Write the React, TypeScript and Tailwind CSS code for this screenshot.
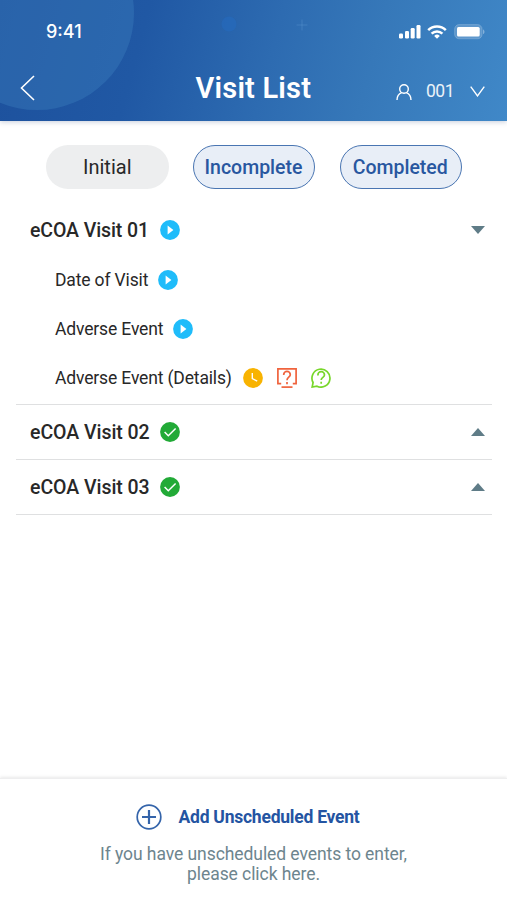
import clsx from "clsx";

const FILTERS = [
  { label: "Initial", active: false },
  { label: "Incomplete", active: true },
  { label: "Completed", active: true },
];

const DETAILS = [
  { label: "Date of Visit", status: "play", width: "w-[92.5px]" },
  { label: "Adverse Event", status: "play", width: "w-[107px]" },
  { label: "Adverse Event (Details)", status: "waiting", width: "w-[177px]" },
];

function PlayIcon() {
  return (
    <svg className="h-5 w-5 shrink-0" viewBox="0 0 20 20">
      <circle cx="10" cy="10" r="9.9" fill="#1fbcfa" />
      <path d="M7.6 5.4v9.2L13.4 10z" fill="#fff" />
    </svg>
  );
}

function CheckIcon() {
  return (
    <svg className="h-5 w-5 shrink-0" viewBox="0 0 20 20" fill="none">
      <circle cx="10" cy="10" r="9.9" fill="#22aa37" />
      <path d="m4.6 10 3.7 3.7 7.3-7.2" stroke="#fff" strokeWidth="1.5" />
    </svg>
  );
}

function ClockIcon() {
  return (
    <svg className="h-5 w-5 shrink-0" viewBox="0 0 20 20" fill="none">
      <circle cx="10" cy="10" r="9.9" fill="#f8b301" />
      <path d="M9.3 5v5.5l4.9 2.7" stroke="#fff" strokeWidth="1.4" />
    </svg>
  );
}

function QueryIcon() {
  return (
    <svg className="h-5 w-5 shrink-0" viewBox="0 0 20 20" fill="none" stroke="#f0633d" strokeWidth="1.7">
      <path d="M4.2 15.6H.9V.9h18.2v14.7h-3.3" />
      <path d="M4.5 19.1h11" />
      <path d="M6.7 7V6.7a3.3 3.3 0 0 1 6.6 0c0 2.5-3.3 2.6-3.3 5.5M10 14v2.2" />
    </svg>
  );
}

function AnswerIcon() {
  return (
    <svg className="h-5 w-5 shrink-0" viewBox="0 0 20 20" fill="none" stroke="#78d72b" strokeWidth="1.7">
      <path d="M1.2 19l.9-4.5A9 9 0 1 1 6 18.2L1.2 19z" />
      <path d="M6.9 7.4v-.5a3.3 3.3 0 0 1 6.6 0c0 2.5-3.3 2.4-3.3 5M10.2 13.8v2" />
    </svg>
  );
}

function Arrow({ open }: { open?: boolean }) {
  return (
    <svg className={clsx("h-2 w-[14px]", open && "rotate-180")} viewBox="0 0 14 8">
      <path d="M7 0 14 8H0z" fill="#5f7c87" />
    </svg>
  );
}

function StatusBar() {
  return (
    <div className="flex h-[63px] items-center justify-between pr-[22px] pl-[46px]">
      <span className="w-[38px] font-[Inter] text-[18px] font-medium whitespace-nowrap">9:41</span>
      <div className="flex items-center">
        <svg className="h-[15px] w-[22px]" viewBox="0 0 22 15" fill="#fff">
          <rect x="0" y="9.5" width="4" height="5" rx="1.2" />
          <rect x="6" y="7" width="4" height="7.5" rx="1.2" />
          <rect x="11.7" y="4" width="4" height="10.5" rx="1.2" />
          <rect x="17.5" y="1" width="4" height="13.5" rx="1.2" />
        </svg>
        <svg className="ml-1.5 h-[14px] w-[20px]" viewBox="0 0 20 14" fill="none" stroke="#fff" strokeWidth="2.5">
          <path d="M1.2 5.1a12.6 12.6 0 0 1 17.6 0" />
          <path d="M4.6 8.6a7.7 7.7 0 0 1 10.8 0" />
          <path d="M10 13.7 7.2 10.9a4 4 0 0 1 5.6 0z" fill="#fff" stroke="none" />
        </svg>
        <svg className="ml-[7px] h-4 w-[31px]" viewBox="0 0 31 16">
          <rect x=".6" y=".6" width="27.5" height="14.2" rx="4.5" fill="#fff" fillOpacity=".18" stroke="#fff" strokeOpacity=".18" />
          <rect x="3" y="3" width="22.7" height="9.4" rx="1.5" fill="#fff" />
          <path d="M29.2 5.4c1.6.7 1.6 4 0 4.7z" fill="#fff" fillOpacity=".45" />
        </svg>
      </div>
    </div>
  );
}

function Header() {
  return (
    <header className="relative h-[120.5px] shrink-0 overflow-hidden bg-[linear-gradient(105deg,#1d519d_0%,#2058a4_28%,#2d6bb1_53%,#3678b9_72%,#4088c8_100%)] text-white shadow-[0_1px_5px_rgba(30,60,110,0.25)]">
      <svg className="absolute inset-0 h-[120px] w-full" viewBox="0 0 507 120">
        <circle cx="37" cy="13" r="97" fill="#3d80bf" fillOpacity=".4" />
        <circle cx="229" cy="24" r="7.5" fill="#2270ca" fillOpacity=".35" />
        <path d="M302 19.5v11M296.5 25h11" stroke="#6da4df" strokeOpacity=".3" />
      </svg>
      <div className="relative">
        <StatusBar />
        <div className="grid h-[50px] grid-cols-[1fr_116px_1fr] items-center pr-[22px] pl-5">
          <svg className="h-[26px] w-[15px]" viewBox="0 0 15 26" fill="none" stroke="#fff" strokeWidth="1.6">
            <path d="M14 1 1.5 13 14 25" />
          </svg>
          <h1 className="pt-px pl-px text-center text-[29px] font-semibold tracking-[0.2px] whitespace-nowrap">Visit List</h1>
          <div className="mt-[7px] flex items-center justify-end">
            <svg className="h-4 w-4" viewBox="0 0 16 16" fill="none" stroke="#fff" strokeWidth="1.4">
              <circle cx="8" cy="5" r="4.3" />
              <path d="M1 16c0-3.7 2.2-6.3 4.7-7.3M15 16c0-3.7-2.2-6.3-4.7-7.3" />
            </svg>
            <span className="ml-[14px] w-[28px] text-[17.5px] tracking-[-0.5px] whitespace-nowrap opacity-90">001</span>
            <svg className="ml-4 h-[11px] w-[15px]" viewBox="0 0 15 11" fill="none" stroke="#fff" strokeWidth="1.4">
              <path d="m.7.7 6.8 9.2L14.3.7" />
            </svg>
          </div>
        </div>
      </div>
    </header>
  );
}

export default function App() {
  return (
    <div className="flex h-[900px] w-[507px] flex-col overflow-hidden bg-white font-[Roboto,sans-serif] text-[#282828]">
      <Header />
      <main className="flex-1 pt-[24.5px] pr-[15px] pl-4">
        <div className="flex justify-between pr-[30px] pl-[30px]">
          {FILTERS.map(({ label, active }) => (
            <button
              key={label}
              className={clsx(
                "h-11 w-[122.5px] rounded-full",
                active
                  ? "border-[1.5px] border-[#4975b2] bg-[#e8eef7] pt-px pr-px text-[19.5px] font-medium text-[#2857a0]"
                  : "bg-[#edeeef] text-[20px]"
              )}
            >
              {label}
            </button>
          ))}
        </div>
        <section className="mt-4 border-b border-[#dfe0e1] pb-[2px]">
          <div className="flex h-[50px] items-center justify-between pr-[7.5px] pl-[14px]">
            <div className="flex items-center gap-[10.5px]">
              <h2 className="w-[119px] pt-[2px] text-[19.5px] font-medium tracking-[-0.1px] whitespace-nowrap">eCOA Visit 01</h2>
              <PlayIcon />
            </div>
            <Arrow open />
          </div>
          {DETAILS.map(({ label, status, width }) => (
            <div key={label} className="flex h-[49px] items-center pl-[39px]">
              <span className={clsx("pt-[2px] text-[17.5px] tracking-[-0.15px] whitespace-nowrap", width)}>{label}</span>
              <div className="ml-[10.5px] flex gap-[14px]">
                {status === "play" ? (
                  <PlayIcon />
                ) : (
                  <>
                    <ClockIcon />
                    <QueryIcon />
                    <AnswerIcon />
                  </>
                )}
              </div>
            </div>
          ))}
        </section>
        {["02", "03"].map((visit) => (
          <section key={visit} className="flex h-[55px] items-center justify-between border-b border-[#dfe0e1] pr-[7.5px] pl-[14px]">
            <div className="flex items-center gap-[9.5px]">
              <h2 className="w-[120px] pt-[2px] text-[19.5px] font-medium tracking-[-0.05px] whitespace-nowrap">eCOA Visit {visit}</h2>
              <CheckIcon />
            </div>
            <Arrow />
          </section>
        ))}
      </main>
      <footer className="flex h-[122px] shrink-0 flex-col items-center border-t border-[#eeeeef] pt-[25px] shadow-[0_-1px_3px_rgba(0,0,0,0.09)]">
        <button className="flex items-center gap-[17px] pr-3 text-[17.5px] font-bold tracking-[-0.24px] text-[#2454a2]">
          <svg className="h-[26px] w-[26px]" viewBox="0 0 26 26" fill="none" stroke="#3464aa">
            <circle cx="13" cy="13" r="11.8" strokeWidth="1.7" />
            <path d="M13 6v14M6 13h14" strokeWidth="2.2" />
          </svg>
          Add Unscheduled Event
        </button>
        <p className="mt-[14px] text-center text-[17.5px] leading-5 tracking-[-0.07px] text-[#6d858e]">
          If you have unscheduled events to enter,
          <br />
          please click here.
        </p>
      </footer>
    </div>
  );
}
